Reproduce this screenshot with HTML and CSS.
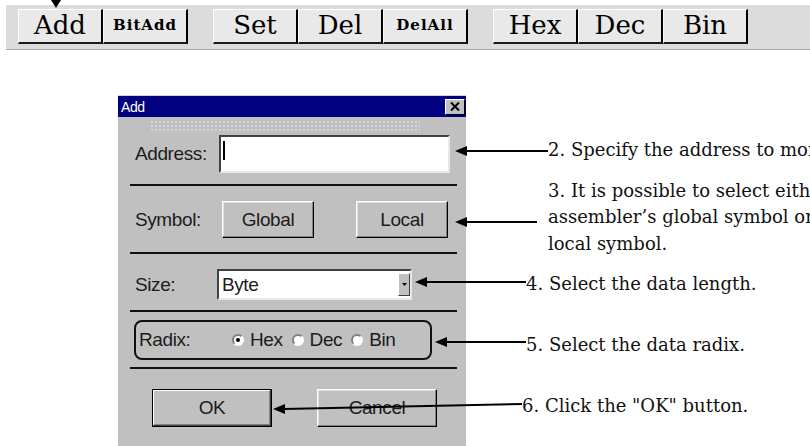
FILE: index.html
```html
<!DOCTYPE html>
<html lang="en">
<head>
    <meta charset="UTF-8">
    <meta name="viewport" content="width=device-width, initial-scale=1.0">
    <title>Add watch point</title>
    <link rel="stylesheet" href="styles.css">
</head>
<body>
    <!-- toolbar of the watch window -->
    <div class="toolbar">
        <div class="group">
            <button class="tb">Add</button>
            <button class="tb small">BitAdd</button>
        </div>
        <div class="group">
            <button class="tb">Set</button>
            <button class="tb">Del</button>
            <button class="tb small">DelAll</button>
        </div>
        <div class="group">
            <button class="tb">Hex</button>
            <button class="tb">Dec</button>
            <button class="tb">Bin</button>
        </div>
    </div>

    <div class="stage">
        <!-- the Add dialog -->
        <div class="dialog">
            <div class="titlebar">
                <span class="title">Add</span>
                <span class="close">
                    <svg width="10" height="9" viewBox="0 0 10 9"><path d="M1 0.5 L9 8.5 M9 0.5 L1 8.5" stroke="#000" stroke-width="2"/></svg>
                </span>
            </div>
            <div class="dither"></div>

            <div class="row address">
                <span class="lbl">Address:</span>
                <div class="field"><span class="caret"></span></div>
            </div>
            <div class="sep s1"></div>

            <div class="row symbol">
                <span class="lbl">Symbol:</span>
                <button class="btn global">Global</button>
                <button class="btn local">Local</button>
            </div>
            <div class="sep s2"></div>

            <div class="row size">
                <span class="lbl">Size:</span>
                <div class="combo">
                    <span>Byte</span>
                    <span class="drop">
                        <svg width="5" height="3" viewBox="0 0 5 3"><path d="M0 0 H5 L2.5 3 Z" fill="#000"/></svg>
                    </span>
                </div>
            </div>
            <div class="sep s3"></div>

            <div class="radix">
                <span class="rlbl">Radix:</span>
                <span class="radio on"></span><span class="opt">Hex</span>
                <span class="radio"></span><span class="opt">Dec</span>
                <span class="radio"></span><span class="opt">Bin</span>
            </div>
            <div class="sep s4"></div>

            <div class="actions">
                <button class="btn ok">OK</button>
                <button class="btn cancel">Cancel</button>
            </div>
        </div>

        <!-- explanations -->
        <div class="notes">
            <p class="n2">2. Specify the address to monitor.</p>
            <p class="n3">3. It is possible to select either the<br>assembler’s global symbol or<br>local symbol.</p>
            <p class="n4">4. Select the data length.</p>
            <p class="n5">5. Select the data radix.</p>
            <p class="n6">6. Click the "OK" button.</p>
        </div>
    </div>

    <!-- leader lines drawn over the picture -->
    <svg class="arrows" width="810" height="446" viewBox="0 0 810 446">
        <polygon points="51,0 61,0 56,8" fill="#000"/>

        <line x1="466" y1="151" x2="548" y2="151" stroke="#000" stroke-width="2"/>
        <polygon points="455,151 467,146 467,156" fill="#000"/>

        <line x1="466" y1="222" x2="537" y2="222" stroke="#000" stroke-width="2"/>
        <polygon points="455,222 467,217 467,227" fill="#000"/>

        <line x1="426" y1="282" x2="526" y2="282" stroke="#000" stroke-width="2"/>
        <polygon points="415,282 427,277 427,287" fill="#000"/>

        <line x1="446" y1="342" x2="526" y2="342" stroke="#000" stroke-width="2"/>
        <polygon points="435,342 447,337 447,347" fill="#000"/>

        <line x1="284" y1="409" x2="522" y2="404" stroke="#000" stroke-width="2"/>
        <polygon points="273,409 285,404 285,414" fill="#000"/>
    </svg>
</body>
</html>
```

FILE: styles.css
```css
body {
    margin: 0;
    width: 810px;
    height: 446px;
    overflow: hidden;
    position: relative;
    background: #fff;
    font-family: "Liberation Sans", Arial, sans-serif;
}

/* toolbar */
.toolbar {
    box-sizing: border-box;
    height: 45px;
    margin: 5px 0 0 6px;
    padding: 4px 0 0 12px;
    display: flex;
    gap: 25px;
    background: #dcdcdc;
    border-bottom: 1px solid #a8a8a8;
}
.group {
    display: flex;
}
.tb {
    box-sizing: border-box;
    width: 85px;
    height: 35px;
    padding: 0 0 2px;
    background: #e9e9e9;
    border: 0;
    border-left: 1px solid #fff;
    border-top: 1px solid #fff;
    border-right: 2px solid #000;
    border-bottom: 2px solid #1a1a1a;
    font-family: "DejaVu Serif", serif;
    font-size: 26px;
    line-height: 1;
    color: #000;
}
.tb.small {
    font-size: 15px;
    font-weight: bold;
    letter-spacing: 1px;
}

/* dialog */
.stage {
    display: flex;
    margin-top: 45px;
    padding-left: 118px;
}
.dialog {
    flex: none;
    width: 348px;
    height: 351px;
    background: #c0c0c0;
    color: #1c1c1c;
    font-size: 19px;
    letter-spacing: -0.4px;
}
.titlebar {
    height: 22px;
    display: flex;
    align-items: center;
    justify-content: space-between;
    padding: 0 1px 0 3px;
    background: #000080;
    border-top: 1px solid #d4d4d4;
    box-sizing: border-box;
}
.title {
    color: #fff;
    font-size: 14px;
}
.close {
    box-sizing: border-box;
    width: 20px;
    height: 16px;
    display: flex;
    align-items: center;
    justify-content: center;
    background: #c0c0c0;
    border: 1px solid;
    border-color: #fff #000 #000 #fff;
}
.dither {
    width: 270px;
    height: 12px;
    margin: 3px 0 0 32px;
    background-image: radial-gradient(#d6d6d6 1px, transparent 1.2px);
    background-size: 4px 4px;
}

.row {
    display: flex;
    align-items: center;
    padding-left: 17px;
}
.lbl {
    width: 84px;
}
.address {
    margin-top: 3px;
}
.field {
    box-sizing: border-box;
    width: 231px;
    height: 38px;
    background: #fff;
    border: 2px solid;
    border-color: #404040 #e8e8e8 #e8e8e8 #404040;
    padding: 4px 0 0 2px;
}
.caret {
    display: block;
    width: 2px;
    height: 19px;
    background: #000;
}

.sep {
    height: 2px;
    margin-left: 12px;
    width: 327px;
    background: #111;
}
.s1 { margin-top: 11px; }
.s2 { margin-top: 14px; }
.s3 { margin-top: 10px; }
.s4 { margin-top: 7px; }

.btn {
    box-sizing: border-box;
    padding: 0;
    background: #c0c0c0;
    border: 1px solid;
    border-color: #fff #000 #000 #fff;
    box-shadow: inset -1px -1px #808080, inset 1px 1px #dfdfdf;
    font-family: "Liberation Sans", Arial, sans-serif;
    font-size: 19px;
    letter-spacing: -0.4px;
    color: #1c1c1c;
}
.symbol {
    margin-top: 15px;
}
.global, .local {
    width: 92px;
    height: 37px;
}
.global {
    margin-left: 3px;
}
.local {
    margin-left: 42px;
}

.size {
    margin-top: 15px;
}
.combo {
    box-sizing: border-box;
    width: 195px;
    height: 31px;
    margin-left: -2px;
    display: flex;
    align-items: center;
    justify-content: space-between;
    padding-left: 3px;
    background: #fff;
    border: 2px solid;
    border-color: #404040 #e8e8e8 #e8e8e8 #404040;
}
.drop {
    box-sizing: border-box;
    width: 12px;
    height: 23px;
    display: flex;
    align-items: center;
    justify-content: center;
    background: #c0c0c0;
    border: 1px solid;
    border-color: #fff #404040 #404040 #fff;
}

.radix {
    box-sizing: border-box;
    width: 298px;
    height: 40px;
    margin: 8px 0 0 16px;
    display: flex;
    align-items: center;
    padding-left: 3px;
    border: 2px solid #111;
    border-radius: 8px;
}
.rlbl {
    width: 93px;
}
.radio {
    box-sizing: border-box;
    width: 12px;
    height: 12px;
    border-radius: 50%;
    background: #fff;
    border: 2px solid;
    border-color: #808080 #fff #fff #808080;
    display: flex;
    align-items: center;
    justify-content: center;
}
.radio.on::after {
    content: "";
    width: 4px;
    height: 4px;
    border-radius: 50%;
    background: #000;
}
.opt {
    margin: 0 9px 0 6px;
}

.actions {
    display: flex;
    gap: 45px;
    margin: 20px 0 0 34px;
}
.ok, .cancel {
    width: 120px;
    height: 38px;
}
.ok {
    border: 1px solid #000;
    box-shadow: inset -1px -1px #404040, inset 1px 1px #fff, inset -2px -2px #808080;
}

/* explanations */
.notes {
    margin-left: 56px;
    display: flex;
    flex-direction: column;
    font-family: "DejaVu Serif", serif;
    font-size: 18px;
    line-height: 26.5px;
    color: #111;
    white-space: nowrap;
}
.notes p {
    margin: 0;
}
.n2 { margin-top: 42px !important; padding-left: 26px; }
.n3 { margin-top: 14px !important; padding-left: 26px; }
.n4 { margin-top: 14px !important; padding-left: 4px; }
.n5 { margin-top: 34px !important; padding-left: 4px; }
.n6 { margin-top: 35px !important; }

.arrows {
    position: absolute;
    top: 0;
    left: 0;
    pointer-events: none;
}
```
